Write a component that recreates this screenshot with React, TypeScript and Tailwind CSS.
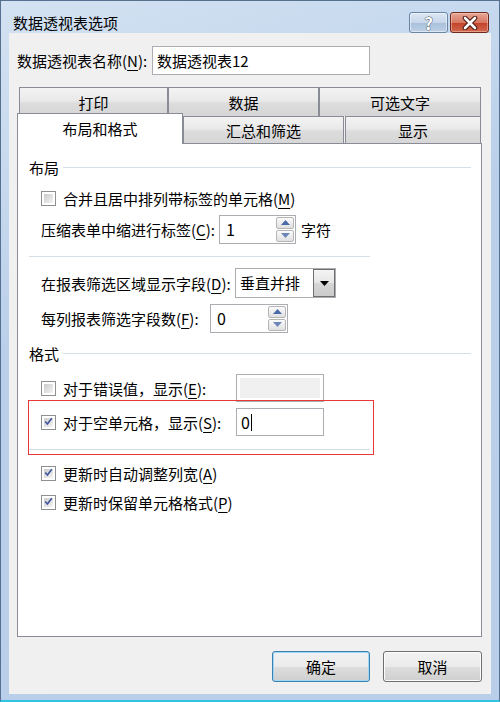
import React from 'react';

const fontCls = "font-['Noto_Sans_CJK_SC','Microsoft_YaHei',sans-serif]";

function Key({ k }: { k: string }) {
  return <span className="underline underline-offset-[3px] decoration-1">{k}</span>;
}

function CheckBox({ checked }: { checked?: boolean }) {
  return (
    <span className="flex h-[15px] w-[15px] shrink-0 border border-[#8e8f8f] bg-white p-[2px]">
      <span className="flex h-full w-full items-center justify-center bg-[linear-gradient(135deg,#cbcbcb,#f4f4f4)]">
        {checked && (
          <svg width="11" height="11" viewBox="0 0 11 11" className="-mt-px">
            <polyline
              points="1.5,5.5 4.2,8.5 9.5,1.5"
              fill="none"
              stroke="#3f569a"
              strokeWidth="2"
            />
          </svg>
        )}
      </span>
    </span>
  );
}

function SpinBtn({ up }: { up?: boolean }) {
  return (
    <span className="flex flex-1 items-center justify-center rounded-[2px] border border-[#b5b5b5] bg-[linear-gradient(#fbfbfb,#e0e0e0)]">
      <svg width="9" height="5" viewBox="0 0 9 5">
        {up ? (
          <polygon points="0,5 4.5,0 9,5" fill="#4a6aa8" />
        ) : (
          <polygon points="0,0 4.5,5 9,0" fill="#6d86b8" />
        )}
      </svg>
    </span>
  );
}

function SpinBox({ value, w }: { value: string; w: string }) {
  return (
    <div className={`flex h-[29px] ${w} shrink-0 border border-[#abadb3] bg-white`}>
      <span className="flex-1 pl-[6px] text-[16px] leading-[26px]">{value}</span>
      <div className="flex w-[19px] flex-col gap-px py-px pr-px">
        <SpinBtn up />
        <SpinBtn />
      </div>
    </div>
  );
}

function Header({ label }: { label: string }) {
  return (
    <div className="flex h-[20px] items-center pl-[11px] pr-[10px]">
      <span className="leading-none">{label}</span>
      <span className="ml-[4px] h-px flex-1 bg-[#d5dfe5]" />
    </div>
  );
}

function Tab({ label, w, h, active }: { label: string; w: string; h: string; active?: boolean }) {
  return (
    <div
      className={`flex ${w} ${h} items-center justify-center leading-none border border-[#898c95] ${
        active
          ? 'relative z-10 -mb-px border-b-0 bg-white pb-[2px]'
          : 'border-b-0 bg-[linear-gradient(#f3f3f3,#e9e9e9_45%,#dcdcdc_55%,#d6d6d6)]'
      }`}
    >
      {label}
    </div>
  );
}

export default function App() {
  return (
    <div
      className={`${fontCls} flex h-[702px] w-[500px] flex-col border-x border-t border-[#56708f] border-b-2 border-b-[#2fc4e3] bg-[linear-gradient(160deg,#d3e2f2,#bad0ea_40%,#b9cfe9)] text-[15px] text-black`}
    >
      {/* title bar */}
      <div className="flex h-[32px] shrink-0 items-start pl-[12px] pr-[10px]">
        <span className="mt-[14px] leading-[16px]">数据透视表选项</span>
        <div className="ml-auto mt-[11px] flex gap-[2px]">
          <div className="flex h-[21px] w-[39px] items-center justify-center rounded-[3px] border border-[#6a84a6] bg-[linear-gradient(#dce7f4_0%,#c7d7ea_50%,#a9c0dc_51%,#bccfe6_100%)] shadow-[inset_0_0_0_1px_rgba(255,255,255,0.5)]">
            <span className="text-[17px] font-bold leading-none text-white [-webkit-text-stroke:0.8px_#3b4b60] [paint-order:stroke_fill]">
              ?
            </span>
          </div>
          <div className="flex h-[21px] w-[39px] items-center justify-center rounded-[3px] border border-[#6e2a1f] bg-[linear-gradient(#e7a796_0%,#d67862_50%,#c24229_51%,#d2684d_100%)] shadow-[inset_0_0_0_1px_rgba(255,220,210,0.45)]">
            <svg width="16" height="14" viewBox="0 0 16 14">
              <path d="M3 2 L13 12 M13 2 L3 12" stroke="#4a1a12" strokeWidth="4.6" strokeLinecap="round" />
              <path d="M3 2 L13 12 M13 2 L3 12" stroke="#ffffff" strokeWidth="2.6" strokeLinecap="round" />
            </svg>
          </div>
        </div>
      </div>

      {/* client */}
      <div className="mx-[8px] flex h-[661px] shrink-0 flex-col bg-[#f0f0f0]">
        <div className="flex h-[29px] items-center pl-[8px] mt-[13px]">
          <span className="w-[135px] shrink-0 leading-none">
            数据透视表名称(<Key k="N" />):
          </span>
          <div className="flex h-[29px] w-[218px] items-center border border-[#abadb3] bg-white pl-[4px] leading-none">
            数据透视表12
          </div>
        </div>

        {/* tabs */}
        <div className="ml-[8px] mt-[12px] flex flex-col">
          <div className="ml-[2px] flex h-[29px]">
            <Tab label="打印" w="w-[149px]" h="h-[29px]" />
            <Tab label="数据" w="w-[151px]" h="h-[29px]" />
            <Tab label="可选文字" w="w-[162px]" h="h-[29px]" />
          </div>
          <div className="-mt-[3px] flex h-[30px] items-end">
            <Tab label="布局和格式" w="w-[166px]" h="h-[31px]" active />
            <Tab label="汇总和筛选" w="w-[161px]" h="h-[27px]" />
            <div className="ml-px">
              <Tab label="显示" w="w-[136px]" h="h-[27px]" />
            </div>
          </div>

          {/* panel */}
          <div className="relative flex h-[494px] w-[465px] flex-col border border-[#898c95] bg-white pt-[13px]">
            <Header label="布局" />
            <div className="mt-[7px] flex h-[28px] items-center pl-[23px]">
              <CheckBox />
              <span className="ml-[7px] leading-none">
                合并且居中排列带标签的单元格(<Key k="M" />)
              </span>
            </div>
            <div className="mt-px flex h-[32px] items-center pl-[23px]">
              <span className="w-[178px] shrink-0 leading-none">
                压缩表单中缩进行标签(<Key k="C" />):
              </span>
              <SpinBox value="1" w="w-[77px]" />
              <span className="ml-[5px] leading-none">字符</span>
            </div>
            <div className="ml-[11px] mt-[11px] h-px w-[341px] bg-[#d5dfe5]" />
            <div className="mt-[11px] flex h-[30px] items-center pl-[23px]">
              <span className="w-[194px] shrink-0 leading-none">
                在报表筛选区域显示字段(<Key k="D" />):
              </span>
              <div className="flex h-[30px] w-[101px] border border-[#abadb3] bg-white">
                <span className="flex-1 pl-[4px] leading-[28px]">垂直并排</span>
                <div className="flex w-[22px] items-center justify-center border border-[#6f6f6f] bg-[linear-gradient(#f4f4f4,#e6e6e6_50%,#d6d6d6_51%,#cbcbcb)]">
                  <svg width="9" height="5" viewBox="0 0 9 5">
                    <polygon points="0,0 4.5,5 9,0" fill="#000000" />
                  </svg>
                </div>
              </div>
            </div>
            <div className="mt-[6px] flex h-[28px] items-center pl-[23px]">
              <span className="w-[169px] shrink-0 leading-none">
                每列报表筛选字段数(<Key k="F" />):
              </span>
              <SpinBox value="0" w="w-[78px]" />
            </div>

            <div className="mt-[11px]">
              <Header label="格式" />
            </div>
            <div className="mt-[11px] flex h-[28px] items-center pl-[23px]">
              <CheckBox />
              <span className="ml-[7px] w-[173px] shrink-0 leading-none">
                对于错误值，显示(<Key k="E" />):
              </span>
              <div className="h-[28px] w-[88px] border border-[#abadb3] bg-white p-[3px]">
                <div className="h-full w-full bg-[#f0f0f0]" />
              </div>
            </div>
            <div className="mt-[6px] flex h-[28px] items-center pl-[23px]">
              <CheckBox checked />
              <span className="ml-[7px] w-[173px] shrink-0 leading-none">
                对于空单元格，显示(<Key k="S" />):
              </span>
              <div className="flex h-[28px] w-[88px] items-center border border-[#abadb3] bg-white pl-[4px]">
                <span className="text-[16px] leading-none">0</span>
                <span className="ml-px h-[17px] w-px bg-black" />
              </div>
            </div>
            <div className="ml-[11px] mt-[13px] h-px w-[341px] bg-[#d5dfe5]" />
            <div className="mt-[9px] flex h-[28px] items-center pl-[23px]">
              <CheckBox checked />
              <span className="ml-[7px] leading-none">
                更新时自动调整列宽(<Key k="A" />)
              </span>
            </div>
            <div className="mt-px flex h-[28px] items-center pl-[23px]">
              <CheckBox checked />
              <span className="ml-[7px] leading-none">
                更新时保留单元格格式(<Key k="P" />)
              </span>
            </div>

            {/* red highlight */}
            <div className="absolute left-[10px] top-[256px] h-[55px] w-[346px] border border-[#e8383a]" />
          </div>
        </div>

        {/* buttons */}
        <div className="mt-[14px] flex justify-end gap-[13px] pr-[9px]">
          <button className="h-[31px] w-[98px] rounded-[3px] border border-[#3c7fb1] bg-[linear-gradient(#f2f2f2_0%,#ebebeb_50%,#dddddd_51%,#cfcfcf_100%)] leading-none shadow-[inset_0_0_0_1px_#9fd8f5]">
            确定
          </button>
          <button className="h-[31px] w-[99px] rounded-[3px] border border-[#707070] bg-[linear-gradient(#f2f2f2_0%,#ebebeb_50%,#dddddd_51%,#cfcfcf_100%)] leading-none shadow-[inset_0_0_0_1px_#fcfcfc]">
            取消
          </button>
        </div>
      </div>
    </div>
  );
}
